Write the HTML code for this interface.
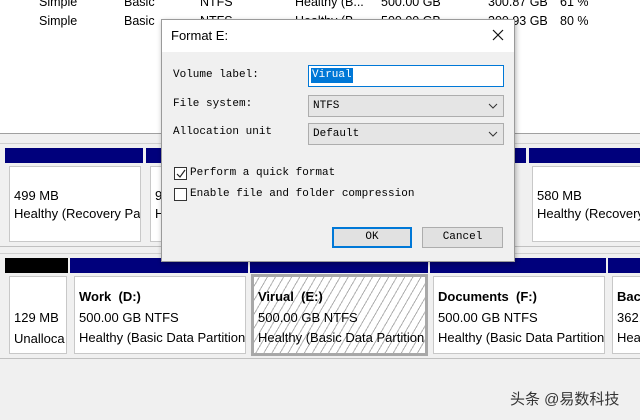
<!DOCTYPE html>
<html><head><meta charset="utf-8"><style>
*{margin:0;padding:0;box-sizing:border-box}
body{width:640px;height:420px;background:#f0f0f0;position:relative;overflow:hidden;font-family:"Liberation Sans",sans-serif;font-size:12px;color:#000}
.a{position:absolute}
.top{left:0;top:0;width:640px;height:134px;background:#fff;border-bottom:1px solid #a0a0a0}
.bar{position:absolute;background:#00007c;height:15px}
.box{position:absolute;background:#fff;border:1px solid #c8c8c8;padding:0 4px;overflow:hidden;white-space:nowrap;line-height:18px;font-size:12.5px}
.r2{line-height:20.5px}
.m{font-family:"Liberation Mono",monospace;font-size:11px}
.sel{position:absolute;left:308px;width:196px;height:22px;background:#e5e5e5;border:1px solid #adadad;padding-left:4px;line-height:21px}
.chev{position:absolute;right:5px;top:7px;width:10px;height:6px}
.cb{position:absolute;width:13px;height:13px;border:1px solid #333;background:#fff}
.btn{position:absolute;height:21px;background:#e1e1e1;border:1px solid #adadad;text-align:center;line-height:19px}
</style></head><body>
<div class="a top"></div>
<div class="a" style="left:39px;top:-7px;line-height:19px;font-size:12.5px">Simple<br>Simple</div>
<div class="a" style="left:124px;top:-7px;line-height:19px;font-size:12.5px">Basic<br>Basic</div>
<div class="a" style="left:200px;top:-7px;line-height:19px;font-size:12.5px">NTFS<br>NTFS</div>
<div class="a" style="left:295px;top:-7px;line-height:19px;font-size:12.5px">Healthy (B...<br>Healthy (B...</div>
<div class="a" style="left:381px;top:-7px;line-height:19px;font-size:12.5px">500.00 GB<br>500.00 GB</div>
<div class="a" style="left:488px;top:-7px;line-height:19px;font-size:12.5px">300.87 GB<br>300.93 GB</div>
<div class="a" style="left:560px;top:-7px;line-height:19px;font-size:12.5px">61 %<br>80 %</div>

<div class="a" style="left:0;top:143px;width:640px;height:104px;border-top:1px solid #d0d0d0;border-bottom:1px solid #c0c0c0"></div>
<div class="bar" style="left:5px;top:148px;width:138px"></div>
<div class="bar" style="left:146px;top:148px;width:380px"></div>
<div class="bar" style="left:529px;top:148px;width:111px"></div>
<div class="box" style="left:9px;top:166px;width:132px;height:76px;padding-top:20px;font-size:13px">499 MB<br>Healthy (Recovery Pa</div>
<div class="box" style="left:150px;top:166px;width:60px;height:76px;padding-top:20px;font-size:13px">9<br>H</div>
<div class="box" style="left:532px;top:166px;width:110px;height:76px;padding-top:20px;font-size:13px">580 MB<br>Healthy (Recovery</div>

<div class="a" style="left:0;top:253px;width:640px;height:106px;border-top:1px solid #d0d0d0;border-bottom:1px solid #c0c0c0"></div>
<div class="bar" style="left:5px;top:258px;width:63px;background:#000"></div>
<div class="bar" style="left:70px;top:258px;width:178px"></div>
<div class="bar" style="left:250px;top:258px;width:178px"></div>
<div class="bar" style="left:430px;top:258px;width:176px"></div>
<div class="bar" style="left:608px;top:258px;width:32px"></div>
<div class="box r2" style="left:9px;top:276px;width:58px;height:78px;padding-top:31px;font-size:13px">129 MB<br>Unalloca</div>
<div class="box r2" style="left:74px;top:276px;width:172px;height:78px;padding-top:10px;font-size:13px"><b>Work&nbsp; (D:)</b><br>500.00 GB NTFS<br>Healthy (Basic Data Partition</div>
<div class="box r2" style="left:251px;top:274px;width:177px;height:82px;padding-top:10px;font-size:13px;border:3px solid #a8a8a8;background:repeating-linear-gradient(-60deg,#fff 0,#fff 6px,#b0b0b0 6px,#b0b0b0 7px)"><b>Virual&nbsp; (E:)</b><br>500.00 GB NTFS<br>Healthy (Basic Data Partition</div>
<div class="box r2" style="left:433px;top:276px;width:172px;height:78px;padding-top:10px;font-size:13px"><b>Documents&nbsp; (F:)</b><br>500.00 GB NTFS<br>Healthy (Basic Data Partition</div>
<div class="box r2" style="left:612px;top:276px;width:40px;height:78px;padding-top:10px;font-size:13px"><b>Backup</b><br>362.00<br>Health</div>

<div class="a" style="left:510px;top:388px;white-space:nowrap;font-family:'Liberation Sans','Noto Sans CJK SC',sans-serif;font-size:15px;color:#333">头条 @易数科技</div>

<div class="a" style="left:161px;top:19px;width:354px;height:243px;background:#f0f0f0;border:1px solid #9a9a9a;box-shadow:1px 2px 5px rgba(0,0,0,.3)">
  <div class="a" style="left:0;top:0;width:352px;height:32px;background:#fff"></div>
  <div class="a" style="left:9px;top:8px;font-size:13px">Format E:</div>
  <svg class="a" style="left:330px;top:9px" width="12" height="12"><path d="M1 1L11 11M11 1L1 11" stroke="#111" stroke-width="1.2"/></svg>
</div>
<div class="a m" style="left:173px;top:69px">Volume label:</div>
<div class="a m" style="left:173px;top:98px">File system:</div>
<div class="a m" style="left:173px;top:126px">Allocation unit</div>
<div class="a" style="left:308px;top:65px;width:196px;height:22px;background:#fff;border:1px solid #0078d7"></div>
<div class="a m" style="left:311px;top:68px;background:#0078d7;color:#fff;line-height:15px;padding:0 1px">Virual</div>
<div class="sel m" style="top:95px">NTFS<svg class="chev" viewBox="0 0 10 6"><path d="M1 1L5 5L9 1" fill="none" stroke="#333"/></svg></div>
<div class="sel m" style="top:123px">Default<svg class="chev" viewBox="0 0 10 6"><path d="M1 1L5 5L9 1" fill="none" stroke="#333"/></svg></div>
<div class="cb" style="left:174px;top:167px"><svg class="a" style="left:1px;top:1px" width="10" height="10"><path d="M1 5L4 8L9 1" fill="none" stroke="#222" stroke-width="1.2"/></svg></div>
<div class="a m" style="left:190px;top:167px">Perform a quick format</div>
<div class="cb" style="left:174px;top:188px"></div>
<div class="a m" style="left:190px;top:188px">Enable file and folder compression</div>
<div class="btn m" style="left:332px;top:227px;width:80px;border:2px solid #0078d7;line-height:17px">OK</div>
<div class="btn m" style="left:422px;top:227px;width:81px">Cancel</div>
</body></html>
